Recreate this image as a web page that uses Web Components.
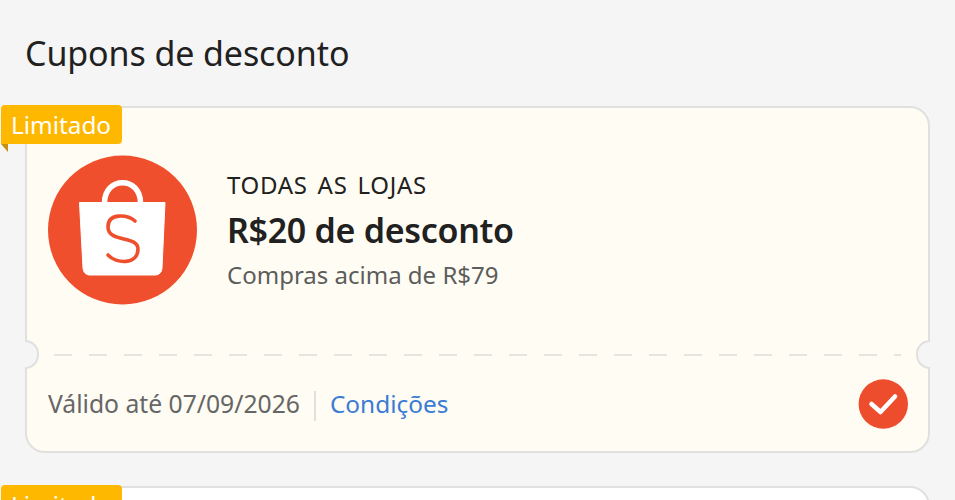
<!DOCTYPE html>
<html lang="pt-BR">
<head>
<meta charset="utf-8">
<style>
    html, body { margin: 0; height: 500px; overflow: hidden; background: #f5f5f6; }
    body { font-family: "Noto Sans", "Open Sans", sans-serif; }
</style>
</head>
<body>
<coupon-page>
    <span slot="title">Cupons de desconto</span>
    <coupon-card store="TODAS AS LOJAS" discount="R$20 de desconto" minimum="Compras acima de R$79" until="Válido até 07/09/2026" link="Condições"></coupon-card>
    <coupon-card theme="white"></coupon-card>
</coupon-page>

<script>
class CouponPage extends HTMLElement {
    constructor() {
        super();
        this.attachShadow({ mode: "open" });
        this.shadowRoot.innerHTML = `
            <style>
                :host { display: block; height: 500px; overflow: hidden; padding: 0 25px 0 0; box-sizing: border-box; }
                h1 {
                    margin: 0;
                    padding: 30px 0 29px 25px;
                    font-size: 34px;
                    line-height: 47px;
                    font-weight: 400;
                    color: #212121;
                    letter-spacing: -0.1px;
                }
                .list { display: flex; flex-direction: column; gap: 33px; }
            </style>
            <h1><slot name="title"></slot></h1>
            <div class="list"><slot></slot></div>
        `;
    }
}

class LimitedBadge extends HTMLElement {
    constructor() {
        super();
        this.attachShadow({ mode: "open" });
        this.shadowRoot.innerHTML = `
            <style>
                :host {
                    position: absolute;
                    left: -26px;
                    top: -3px;
                    display: block;
                    background: #ffb800;
                    color: #fff;
                    font-size: 24.300px;
                    line-height: 39px;
                    height: 39px;
                    padding: 0 11px 0 10px;
                    border-radius: 4px 4px 4px 0;
                }
                .fold {
                    position: absolute;
                    left: 0;
                    top: 39px;
                    width: 0;
                    height: 0;
                    border-top: 8px solid #c4920c;
                    border-left: 7px solid transparent;
                }
            </style>
            <slot></slot><span class="fold"></span>
        `;
    }
}

class ShopLogo extends HTMLElement {
    constructor() {
        super();
        this.attachShadow({ mode: "open" });
        this.shadowRoot.innerHTML = `
            <style>
                :host { display: block; width: 150px; height: 150px; flex: none; }
                svg { display: block; }
            </style>
            <svg width="150" height="150" viewBox="0 0 150 150">
                <circle cx="74.500" cy="75" r="74.500" fill="#ef4f2c"/>
                <path d="M56.500 48C56.500 21 92.500 21 92.500 48" fill="none" stroke="#fff" stroke-width="5.500"/>
                <path d="M31.500 47.500H117L114 113C113.700 117.500 111 120 107 120H42C38 120 35.500 117.500 35 113Z" fill="#fff" stroke="#fff" stroke-width="1" stroke-linejoin="round"/>
                <path d="M87 66C80 60 60 57 60 72C60 88 90 80 90 94C90 110 68 109 60 100" fill="none" stroke="#ef4f2c" stroke-width="3.600" stroke-linecap="round"/>
            </svg>
        `;
    }
}

class CheckMark extends HTMLElement {
    constructor() {
        super();
        this.attachShadow({ mode: "open" });
        this.shadowRoot.innerHTML = `
            <style>
                :host { display: block; width: 50px; height: 50px; flex: none; }
                svg { display: block; }
            </style>
            <svg width="50" height="50" viewBox="0 0 50 50">
                <circle cx="25.300" cy="25" r="24.700" fill="#ee4d2d"/>
                <path d="M13.500 25L22.500 33L37 17.500" fill="none" stroke="#fff" stroke-width="4.500" stroke-linecap="round" stroke-linejoin="round"/>
            </svg>
        `;
    }
}

class CouponCard extends HTMLElement {
    constructor() {
        super();
        this.attachShadow({ mode: "open" });
        const get = (name) => this.getAttribute(name);
        const body = get("store") ? `
                <div class="top">
                    <shop-logo></shop-logo>
                    <div class="info">
                        <span class="store">${get("store")}</span>
                        <span class="discount">${get("discount")}</span>
                        <span class="minimum">${get("minimum")}</span>
                    </div>
                </div>
                <div class="dash"></div>
                <span class="notch left"></span>
                <span class="notch right"></span>
                <div class="bottom">
                    <span class="until">${get("until")}</span>
                    <span class="sep"></span>
                    <span class="link">${get("link")}</span>
                    <check-mark></check-mark>
                </div>` : "";
        this.shadowRoot.innerHTML = `
            <style>
                :host { display: block; margin-left: 25px; }
                .card {
                    position: relative;
                    height: 347px;
                    box-sizing: border-box;
                    border: 2px solid #e0e0de;
                    border-radius: 20px;
                    background: #fffcf3;
                }
                :host([theme="white"]) .card { background: #fff; }
                .top {
                    height: 246px;
                    box-sizing: border-box;
                    display: flex;
                    align-items: flex-start;
                    gap: 29px;
                    padding: 47px 0 0 21px;
                }
                .info { display: flex; flex-direction: column; padding-top: 13px; }
                .store { font-size: 24px; line-height: 34px; color: #212121; letter-spacing: 0.7px; word-spacing: 3px; }
                .discount { font-size: 34px; line-height: 56px; font-weight: 600; color: #212121; letter-spacing: -0.3px; }
                .minimum { font-size: 24px; line-height: 34px; color: #5c5c5c; }
                .dash {
                    height: 2px;
                    margin: 0 27px;
                    background: repeating-linear-gradient(90deg, #e6e4de 0 18px, transparent 18px 35px);
                }
                .bottom {
                    display: flex;
                    align-items: center;
                    padding: 23px 20px 0 21px;
                    font-size: 24.700px;
                    line-height: 50px;
                }
                .until { color: #666; }
                .sep { width: 2px; height: 30px; margin: 4px 14px 0 14px; background: #e2e0da; }
                .link { color: #3a7bd5; flex: 1; font-size: 24.400px; }
                .notch {
                    position: absolute;
                    top: 232px;
                    width: 12px;
                    height: 25px;
                    box-sizing: content-box;
                    border: 2px solid #e0e0de;
                    background: #f5f5f6;
                }
                .notch.left { left: -2px; border-left: 0; border-radius: 0 15px 15px 0; }
                .notch.right { right: -2px; border-right: 0; border-radius: 15px 0 0 15px; }
            </style>
            <div class="card">
                <limited-badge>Limitado</limited-badge>${body}
            </div>
        `;
    }
}

window.customElements.define("limited-badge", LimitedBadge);
window.customElements.define("shop-logo", ShopLogo);
window.customElements.define("check-mark", CheckMark);
window.customElements.define("coupon-card", CouponCard);
window.customElements.define("coupon-page", CouponPage);
</script>
</body>
</html>
